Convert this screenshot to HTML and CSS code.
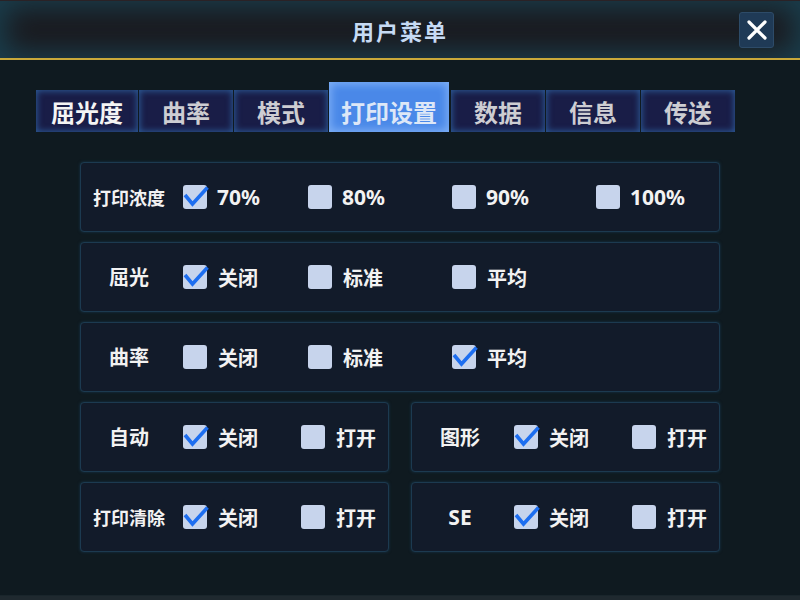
FILE: index.html
```html
<!DOCTYPE html>
<html lang="zh">
<head>
<meta charset="utf-8">
<title>用户菜单</title>
<link rel="stylesheet" href="styles.css">
</head>
<body>
<header class="topbar">
  <h1 class="title">用户菜单</h1>
  <button class="close" aria-label="关闭">
    <svg width="20" height="20" viewBox="0 0 20 20"><path d="M2 2 L18 18 M18 2 L2 18" stroke="#fff" stroke-width="3.2" stroke-linecap="round"/></svg>
  </button>
</header>

<nav class="tabs">
  <div class="tab tab-first">屈光度</div>
  <div class="tab">曲率</div>
  <div class="tab">模式</div>
  <div class="tab tab-active">打印设置</div>
  <div class="tab">数据</div>
  <div class="tab">信息</div>
  <div class="tab">传送</div>
</nav>

<main class="panels">
  <section class="panel full">
    <div class="label small">打印浓度</div>
    <div class="opt w1"><span class="box on"><svg viewBox="0 0 24 24"><path d="M2 10 L9.5 19 L24.5 2.5"/></svg></span><span class="otext num">70%</span></div>
    <div class="opt w2"><span class="box"></span><span class="otext num">80%</span></div>
    <div class="opt w2"><span class="box"></span><span class="otext num">90%</span></div>
    <div class="opt"><span class="box"></span><span class="otext num">100%</span></div>
  </section>
  <section class="panel full">
    <div class="label">屈光</div>
    <div class="opt w1"><span class="box on"><svg viewBox="0 0 24 24"><path d="M2 10 L9.5 19 L24.5 2.5"/></svg></span><span class="otext">关闭</span></div>
    <div class="opt w2"><span class="box"></span><span class="otext">标准</span></div>
    <div class="opt w2"><span class="box"></span><span class="otext">平均</span></div>
  </section>
  <section class="panel full">
    <div class="label">曲率</div>
    <div class="opt w1"><span class="box"></span><span class="otext">关闭</span></div>
    <div class="opt w2"><span class="box"></span><span class="otext">标准</span></div>
    <div class="opt w2"><span class="box on"><svg viewBox="0 0 24 24"><path d="M2 10 L9.5 19 L24.5 2.5"/></svg></span><span class="otext">平均</span></div>
  </section>
  <div class="pair">
    <section class="panel half">
      <div class="label">自动</div>
      <div class="opt wh"><span class="box on"><svg viewBox="0 0 24 24"><path d="M2 10 L9.5 19 L24.5 2.5"/></svg></span><span class="otext">关闭</span></div>
      <div class="opt"><span class="box"></span><span class="otext">打开</span></div>
    </section>
    <section class="panel half">
      <div class="label">图形</div>
      <div class="opt wh"><span class="box on"><svg viewBox="0 0 24 24"><path d="M2 10 L9.5 19 L24.5 2.5"/></svg></span><span class="otext">关闭</span></div>
      <div class="opt"><span class="box"></span><span class="otext">打开</span></div>
    </section>
  </div>
  <div class="pair">
    <section class="panel half">
      <div class="label small">打印清除</div>
      <div class="opt wh"><span class="box on"><svg viewBox="0 0 24 24"><path d="M2 10 L9.5 19 L24.5 2.5"/></svg></span><span class="otext">关闭</span></div>
      <div class="opt"><span class="box"></span><span class="otext">打开</span></div>
    </section>
    <section class="panel half">
      <div class="label latin">SE</div>
      <div class="opt wh"><span class="box on"><svg viewBox="0 0 24 24"><path d="M2 10 L9.5 19 L24.5 2.5"/></svg></span><span class="otext">关闭</span></div>
      <div class="opt"><span class="box"></span><span class="otext">打开</span></div>
    </section>
  </div>
</main>
<footer class="bottom"></footer>
</body>
</html>
```

FILE: styles.css
```css
* { box-sizing: border-box; }
html, body { margin: 0; padding: 0; }
body {
  width: 800px;
  height: 600px;
  overflow: hidden;
  background: #0f1a20;
  font-family: "Noto Sans", "Noto Sans CJK SC", sans-serif;
  color: #f2f2f2;
  position: relative;
}

.topbar {
  height: 60px;
  background: #1a1a1f;
  border-top: 1px solid #2a2226;
  border-bottom: 2px solid #c8a83a;
  box-shadow: inset 0 0 28px 6px #1a3f4e;
  display: flex;
  align-items: center;
  justify-content: center;
  position: relative;
}
.title {
  margin: 0;
  font-family: "Noto Sans CJK SC", sans-serif;
  font-size: 22px;
  font-weight: 700;
  color: #c6daf4;
  letter-spacing: 2px;
  padding-top: 1px;
}
.close {
  position: absolute;
  right: 26px;
  top: 11px;
  width: 35px;
  height: 36px;
  background: #1f3a56;
  border: 1px solid #2d4b68;
  border-radius: 3px;
  padding: 0;
  display: flex;
  align-items: center;
  justify-content: center;
}

.tabs {
  display: flex;
  align-items: flex-end;
  gap: 1px;
  margin-top: 22px;
  padding-left: 36px;
  height: 50px;
}
.tab {
  width: 94px;
  height: 42px;
  background: #191d47;
  box-shadow: inset 0 0 6px 1px #2c5a96;
  display: flex;
  align-items: center;
  justify-content: center;
  font-family: "Noto Sans CJK SC", sans-serif;
  font-size: 24px;
  font-weight: 700;
  color: #cdcdd2;
}
.tab-first { width: 102px; color: #f4f4f4; }
.tab-active {
  width: 120px;
  height: 50px;
  margin-right: 1px;
  background: #4a88e8;
  box-shadow: inset 0 0 8px 2px #7fb0f6;
  color: #dde7f7;
  padding-top: 8px;
}

.panels {
  margin-top: 30px;
  padding-left: 80px;
  width: 720px;
  display: flex;
  flex-direction: column;
  gap: 10px;
}
.pair {
  display: flex;
  gap: 22px;
}
.panel {
  height: 70px;
  background: #121b2a;
  border: 1px solid #1c3a50;
  border-radius: 4px;
  box-shadow: 0 0 3px #17374c;
  display: flex;
  align-items: center;
}
.full { width: 640px; }
.half { width: 309px; }

.label {
  width: 96px;
  text-align: center;
  font-family: "Noto Sans CJK SC", sans-serif;
  font-size: 20px;
  font-weight: 700;
  color: #f2f2f2;
  margin-top: -1px;
}
.label.small { font-size: 18px; }
.label.latin { font-family: "Noto Sans", sans-serif; font-size: 21px; }

.opt {
  display: flex;
  align-items: center;
  margin-left: 6px;
}
.opt + .opt { margin-left: 0; }
.w1 { width: 125px; }
.w2 { width: 144px; }
.wh { width: 118px; }

.box {
  width: 24px;
  height: 24px;
  background: #c7d4ec;
  border-radius: 3px;
  flex: none;
  position: relative;
}
.box svg {
  position: absolute;
  left: 0;
  top: 0;
  width: 24px;
  height: 24px;
  overflow: visible;
}
.box svg path {
  fill: none;
  stroke: #1d6ef0;
  stroke-width: 3.6;
  stroke-linejoin: miter;
}
.otext {
  margin-left: 11px;
  font-family: "Noto Sans CJK SC", sans-serif;
  font-size: 20px;
  font-weight: 700;
  color: #f2f2f2;
}
.otext.num {
  font-family: "Noto Sans", sans-serif;
  font-size: 21px;
  margin-left: 10px;
}

.bottom {
  position: absolute;
  left: 0;
  right: 0;
  bottom: 0;
  height: 5px;
  background: #1f292f;
  border-top: 1px solid #19252b;
}
```
